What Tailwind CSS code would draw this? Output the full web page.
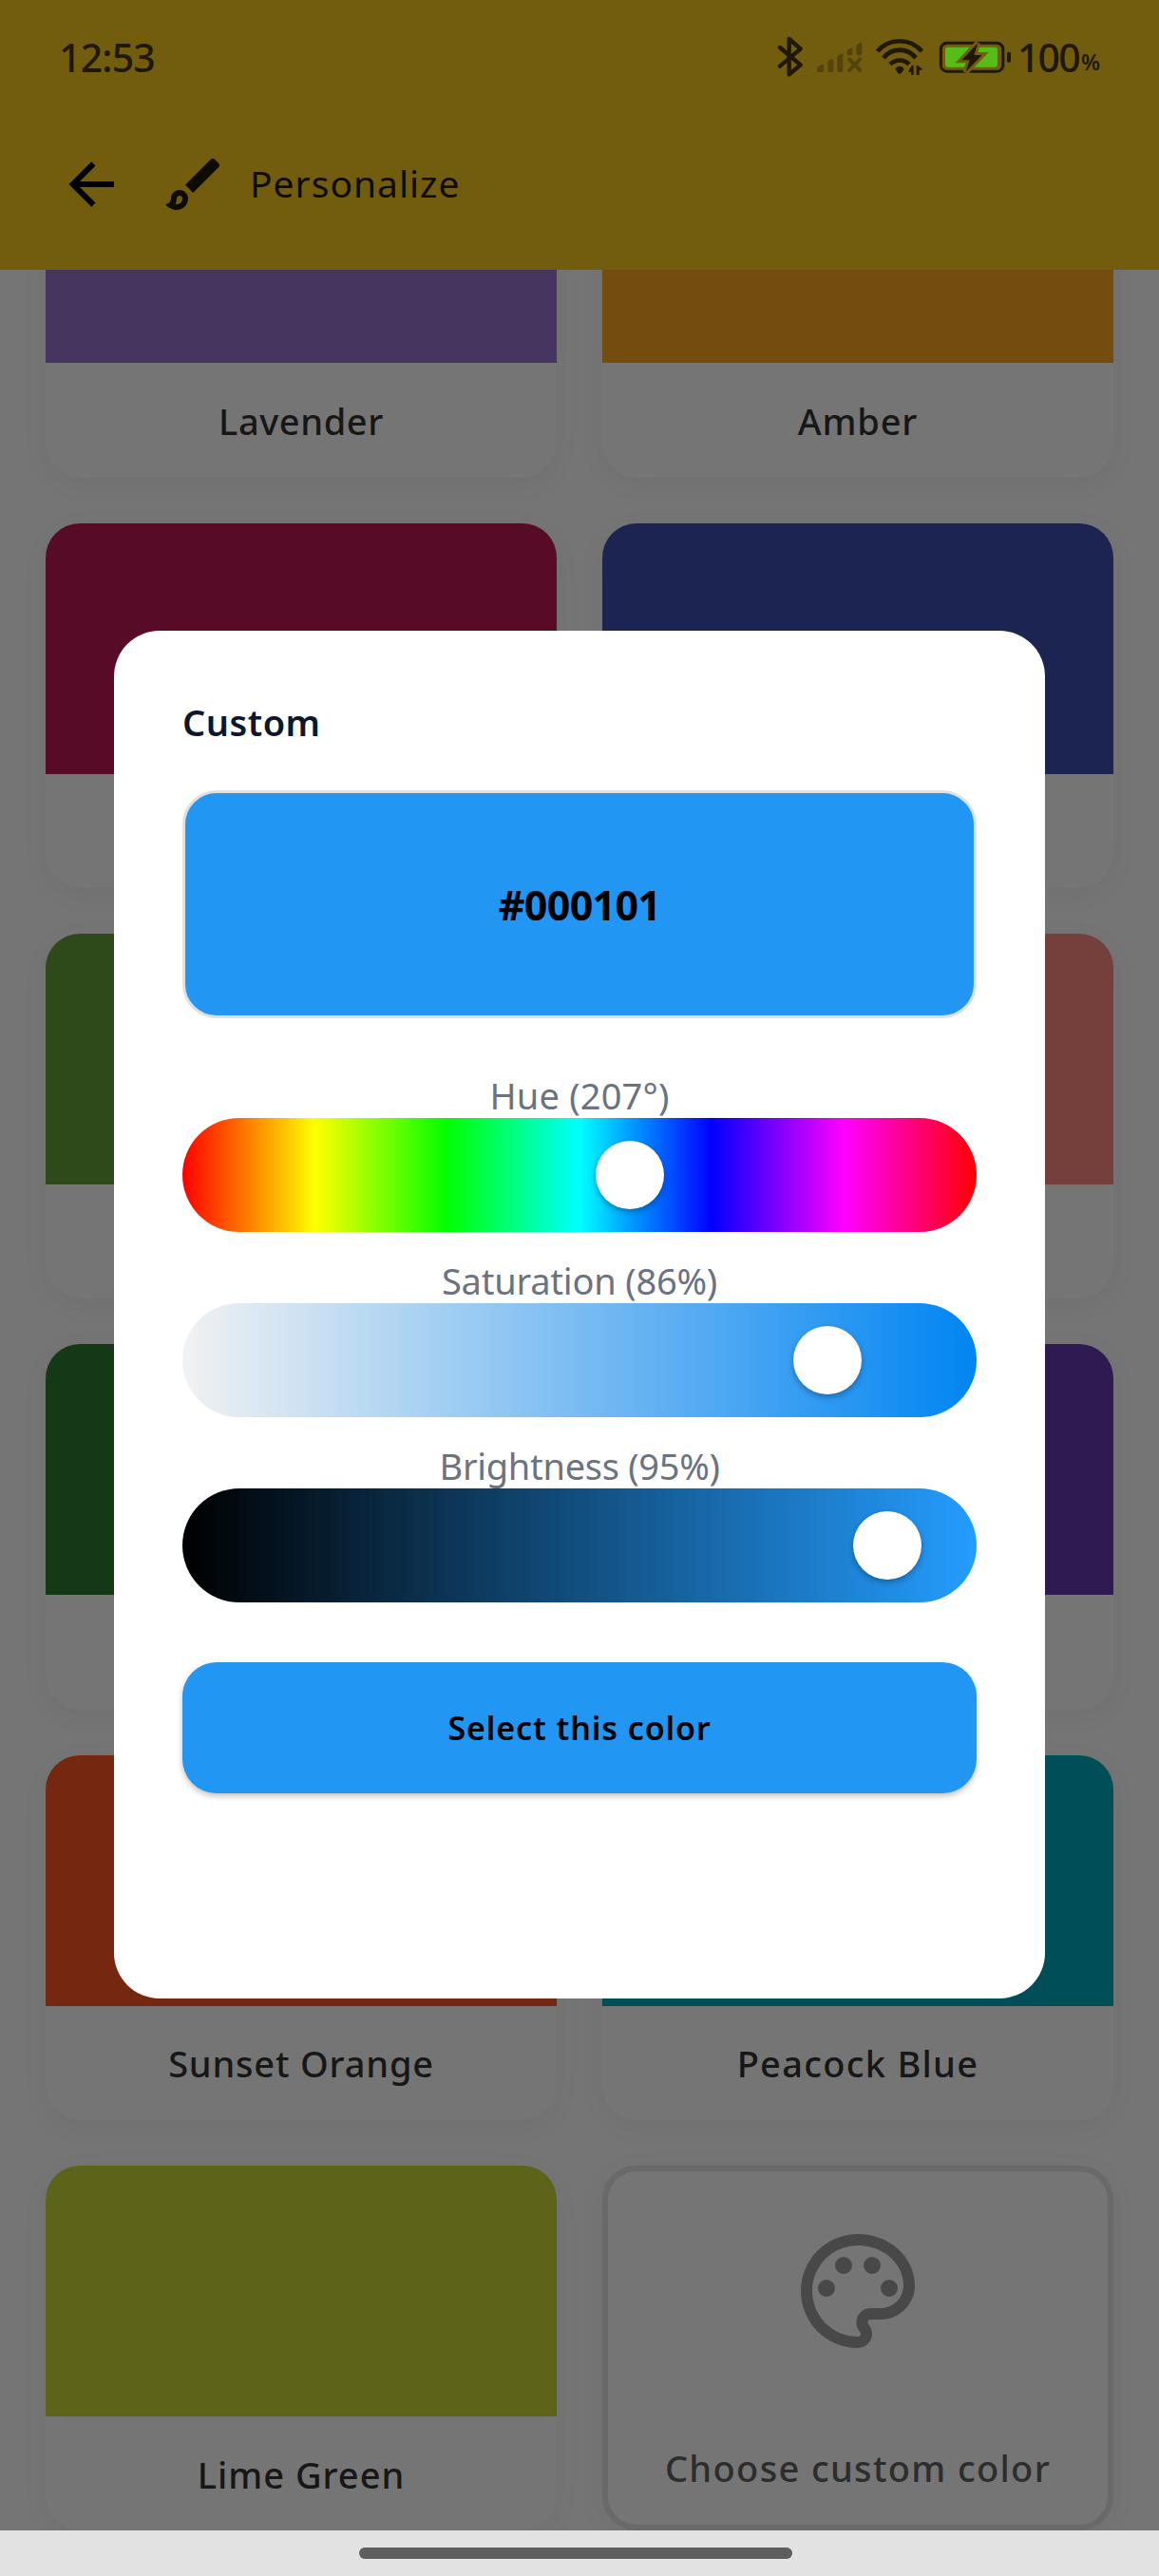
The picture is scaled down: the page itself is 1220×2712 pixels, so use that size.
<!DOCTYPE html>
<html lang="en">
<head>
<meta charset="utf-8">
<title>Personalize</title>
<script src="https://cdn.jsdelivr.net/npm/@tailwindcss/browser@4"></script>
</head>
<body class="w-[1220px] h-[2712px] overflow-hidden bg-[#757575] font-['Noto_Sans',sans-serif]">
<div class="relative flex h-[2712px] w-[1220px] flex-col">

  <!-- Status bar and app bar -->
  <header class="relative z-10 h-[284px] shrink-0 bg-[#725d0e]">
    <div class="flex h-[118px] items-center justify-between pt-[2px] pl-[62px] pr-[63px] text-[#1f1804]">
      <span class="text-[41px] leading-none font-medium tracking-[-0.8px]">12:53</span>
      <div class="flex items-center">
        <svg class="h-[44px] w-[28px]" viewBox="116 112 84 132" fill="none" stroke="currentColor" stroke-width="13" stroke-linecap="round" stroke-linejoin="round"><path d="M125 148L190 203L154 233V121L190 152L125 207"/></svg>
        <svg class="ml-[13px] h-[34px] w-[50px]" viewBox="239 129 150 102" fill="#54440b">
          <path d="M242 228V217Q243 211 249 208L258 204Q264 202 264 208V222Q264 228 258 228Z"/>
          <path d="M276 222V198Q276 193 281 190L288 187Q294 185 294 191V222Q294 228 288 228H282Q276 228 276 222Z"/>
          <path d="M306 222V181Q306 176 311 173L318 170Q324 167 324 173V222Q324 228 318 228H312Q306 228 306 222Z"/>
          <path d="M336 169V164Q336 159 341 156L348 152Q354 149 354 155V169Q354 175 348 175H342Q336 175 336 169Z"/>
          <path d="M366 169V147Q366 142 371 139L378 135Q384 132 384 138V169Q384 175 378 175H372Q366 175 366 169Z"/>
          <path d="M344 187L378 222M378 187L344 222" stroke="#54440b" stroke-width="12" stroke-linecap="round"/>
        </svg>
        <svg class="ml-[12px] h-[40px] w-[52px]" viewBox="424 120 156 120" fill="none" stroke="currentColor" stroke-width="14">
          <path d="M432 162A92 92 0 0 1 572 162"/><path d="M451 183A64 64 0 0 1 553 183"/><path d="M472 203A42 42 0 0 1 532 203"/>
          <path d="M488 219Q492 209 502 209T516 219L506 232Q502 236 498 232Z" fill="currentColor" stroke="none"/>
          <path d="M541 207H546V237H538V228H531V222ZM555 207H559L573 217V221H564V237H555Z" fill="currentColor" stroke="none"/>
        </svg>
        <svg class="ml-[15px] h-[36px] w-[78px]" viewBox="624 124 234 108">
          <rect x="631" y="133.500" width="196.500" height="90" rx="20" fill="none" stroke="currentColor" stroke-width="9"/>
          <rect x="840" y="162" width="12" height="33" rx="5" fill="currentColor"/>
          <rect x="645" y="147" width="165" height="63" rx="9" fill="#56bd16"/>
          <path d="M748 134L697 188H722L709 226L761 172H736Z" fill="#1f1804" stroke="#725d0e" stroke-width="18" paint-order="stroke"/>
        </svg>
        <span class="ml-[5px] text-[41px] leading-none font-medium tracking-[-1.8px]">100</span>
        <span class="mt-[11px] ml-[2px] text-[23px] leading-none font-semibold tracking-[-1px]">%</span>
      </div>
    </div>
    <div class="flex h-[152px] items-center pl-[60px] text-[#0e0c00]">
      <svg class="size-[72px]" viewBox="0 0 24 24" fill="#000"><path d="M20 11V13H8L13.500 18.500L12.080 19.920L4.160 12L12.080 4.080L13.500 5.500L8 11H20Z"/></svg>
      <svg class="ml-[36px] size-[72px]" viewBox="0 0 24 24" fill="currentColor"><path d="M7 16c.55 0 1 .45 1 1 0 1.100-.9 2-2 2-.17 0-.33-.02-.5-.05.31-.55.5-1.210.5-1.950 0-.55.45-1 1-1M18.670 3c-.26 0-.51.1-.71.290L9 12.250 11.750 15l8.960-8.960c.39-.39.39-1.020 0-1.410l-1.340-1.340c-.2-.2-.45-.29-.7-.29zM7 14c-1.660 0-3 1.340-3 3 0 1.310-1.160 2-2 2 .92 1.220 2.490 2 4 2 2.210 0 4-1.790 4-4 0-1.660-1.340-3-3-3z"/></svg>
      <h1 class="mb-[3px] ml-[23px] text-[39px] leading-[56px] font-normal tracking-[1px]">Personalize</h1>
    </div>
  </header>

  <!-- Theme colour grid, scrolled under the app bar -->
  <main class="h-[2380px] shrink-0 overflow-hidden text-[38px] font-medium tracking-[0.800px] text-[#171717]">
    <div class="-mt-[165.700px] grid auto-rows-[384.330px] grid-cols-[538px_538px] gap-12 pl-12">
      <div class="flex flex-col overflow-hidden rounded-[36px] bg-[#757575] shadow-[0_6px_30px_rgba(0,0,0,0.045)]"><div class="h-[264px] shrink-0 bg-[#46355e]"></div><div class="flex flex-1 items-center justify-center pt-[2px] tracking-[0.600px]">Lavender</div></div>
      <div class="flex flex-col overflow-hidden rounded-[36px] bg-[#757575] shadow-[0_6px_30px_rgba(0,0,0,0.045)]"><div class="h-[264px] shrink-0 bg-[#754c0f]"></div><div class="flex flex-1 items-center justify-center pt-[2px]">Amber</div></div>
      <div class="overflow-hidden rounded-[36px] bg-[#757575] shadow-[0_6px_30px_rgba(0,0,0,0.045)]"><div class="h-[264px] bg-[#570b27]"></div></div>
      <div class="overflow-hidden rounded-[36px] bg-[#757575] shadow-[0_6px_30px_rgba(0,0,0,0.045)]"><div class="h-[264px] bg-[#1c2451]"></div></div>
      <div class="overflow-hidden rounded-[36px] bg-[#757575] shadow-[0_6px_30px_rgba(0,0,0,0.045)]"><div class="h-[264px] bg-[#2f4a1a]"></div></div>
      <div class="overflow-hidden rounded-[36px] bg-[#757575] shadow-[0_6px_30px_rgba(0,0,0,0.045)]"><div class="h-[264px] bg-[#75403b]"></div></div>
      <div class="overflow-hidden rounded-[36px] bg-[#757575] shadow-[0_6px_30px_rgba(0,0,0,0.045)]"><div class="h-[264px] bg-[#153817]"></div></div>
      <div class="overflow-hidden rounded-[36px] bg-[#757575] shadow-[0_6px_30px_rgba(0,0,0,0.045)]"><div class="h-[264px] bg-[#2f1b51]"></div></div>
      <div class="flex flex-col overflow-hidden rounded-[36px] bg-[#757575] shadow-[0_6px_30px_rgba(0,0,0,0.045)]"><div class="h-[264px] shrink-0 bg-[#752710]"></div><div class="flex flex-1 items-center justify-center pt-[2px]">Sunset Orange</div></div>
      <div class="flex flex-col overflow-hidden rounded-[36px] bg-[#757575] shadow-[0_6px_30px_rgba(0,0,0,0.045)]"><div class="h-[264px] shrink-0 bg-[#004f58]"></div><div class="flex flex-1 items-center justify-center pt-[2px] tracking-[1.300px]">Peacock Blue</div></div>
      <div class="flex flex-col overflow-hidden rounded-[36px] bg-[#757575] shadow-[0_6px_30px_rgba(0,0,0,0.045)]"><div class="h-[264px] shrink-0 bg-[#5d6419]"></div><div class="flex flex-1 items-center justify-center pt-[2px] tracking-[1px]">Lime Green</div></div>
      <div class="flex flex-col items-center rounded-[36px] border-[6px] border-[#696969] bg-[#757575] pt-[54px] shadow-[0_6px_30px_rgba(0,0,0,0.045)]">
        <svg class="size-[144px] shrink-0" viewBox="0 0 24 24" fill="#484848"><path d="M12 22C6.490 22 2 17.510 2 12S6.490 2 12 2s10 4.040 10 9c0 3.310-2.690 6-6 6h-1.770c-.28 0-.5.22-.5.5 0 .12.05.23.13.33.41.47.64 1.060.64 1.670A2.500 2.500 0 0 1 12 22zm0-18c-4.410 0-8 3.590-8 8s3.590 8 8 8c.28 0 .5-.22.5-.5a.54.54 0 0 0-.14-.35c-.41-.46-.63-1.050-.63-1.650a2.500 2.500 0 0 1 2.500-2.500H16c2.210 0 4-1.790 4-4 0-3.860-3.590-7-8-7z"/><circle cx="6.500" cy="11.500" r="1.500"/><circle cx="9.500" cy="7.500" r="1.500"/><circle cx="14.500" cy="7.500" r="1.500"/><circle cx="17.500" cy="11.500" r="1.500"/></svg>
        <div class="mt-[86px] leading-[56px] tracking-[1.350px] whitespace-nowrap text-[#2d2d2d]">Choose custom color</div>
      </div>
    </div>
  </main>

  <!-- Gesture navigation bar -->
  <footer class="flex h-12 shrink-0 justify-center bg-[#e2e2e2] pt-[18px] pr-[8px]">
    <div class="h-3 w-[456px] rounded-full bg-[#5e5e5e]"></div>
  </footer>

  <!-- Custom colour dialog -->
  <section class="absolute top-[664px] left-[120px] z-20 flex h-[1440px] w-[980px] flex-col rounded-[48px] bg-white p-[72px]">
    <h2 class="text-[38px] leading-[48px] font-semibold tracking-[0.500px] text-[#0f172a]">Custom</h2>
    <div class="mt-12 flex h-[240px] shrink-0 items-center justify-center rounded-[36px] border-[3px] border-[#e0e0e0] bg-[#2196f3] pt-[2px] text-[43px] font-bold tracking-[-0.700px] text-black">#000101</div>

    <div class="mt-[57px] flex flex-col gap-[27px] text-center text-[38px] leading-[48px] text-[#6b7280]">
      <div>
        <div class="tracking-[0.200px]">Hue (207°)</div>
        <div class="flex h-[120px] items-center rounded-full bg-[linear-gradient(to_right,#f00,#ff0,#0f0,#0ff,#00f,#f0f,#f00)]"><div class="ml-[435px] size-[72px] rounded-full bg-white shadow-[0_3px_6px_rgba(0,0,0,0.3)]"></div></div>
      </div>
      <div>
        <div class="tracking-[-0.200px]">Saturation (86%)</div>
        <div class="flex h-[120px] items-center rounded-full bg-[linear-gradient(to_right,#f2f2f2,#0085f2)]"><div class="ml-[643px] size-[72px] rounded-full bg-white shadow-[0_3px_6px_rgba(0,0,0,0.3)]"></div></div>
      </div>
      <div>
        <div class="tracking-[-0.300px]">Brightness (95%)</div>
        <div class="flex h-[120px] items-center rounded-full bg-[linear-gradient(to_right,#000,#249dff)]"><div class="ml-[706px] size-[72px] rounded-full bg-white shadow-[0_3px_6px_rgba(0,0,0,0.3)]"></div></div>
      </div>
    </div>

    <button class="mt-[63px] h-[138px] shrink-0 rounded-[36px] bg-[#2196f3] text-[34px] font-semibold tracking-[0.900px] text-black shadow-[0_3px_6px_rgba(0,0,0,0.25)]">Select this color</button>
  </section>
</div>
</body>
</html>
